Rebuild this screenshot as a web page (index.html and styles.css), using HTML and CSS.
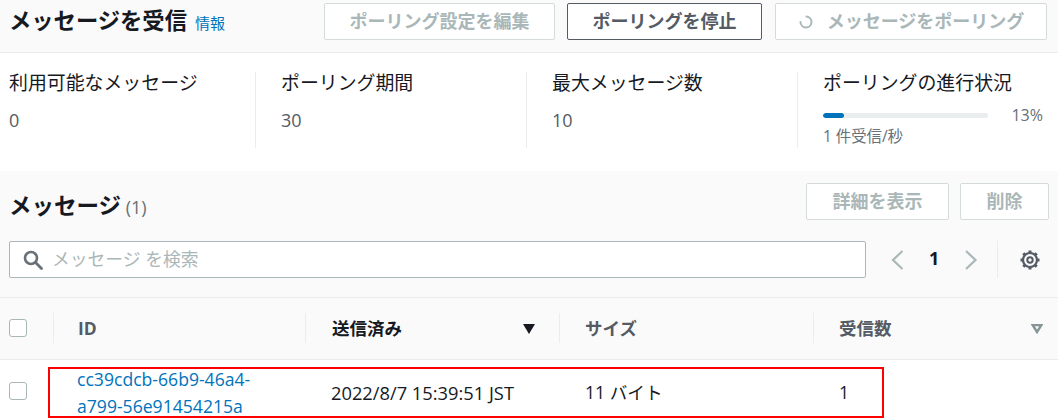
FILE: index.html
```html
<!DOCTYPE html>
<html lang="ja">
<head>
<meta charset="utf-8">
<title>メッセージを受信</title>
<link rel="stylesheet" href="styles.css">
</head>
<body>
<div class="page">
  <header class="topbar">
    <div class="title-wrap">
      <h1 class="h-title">メッセージを受信</h1>
      <a class="info" href="#">情報</a>
    </div>
    <div class="actions">
      <button class="btn btn-edit" disabled>ポーリング設定を編集</button>
      <button class="btn btn-stop">ポーリングを停止</button>
      <button class="btn btn-poll" disabled>
        <svg class="spinner" width="16" height="16" viewBox="0 0 16 16"><path d="M8.5 2.500A5.500 5.500 0 1 1 2.500 8" fill="none" stroke="#aab7b8" stroke-width="2" stroke-linecap="round"/></svg>
        <span>メッセージをポーリング</span>
      </button>
    </div>
  </header>

  <section class="stats">
    <div class="stat"><div class="stat-label">利用可能なメッセージ</div><div class="stat-value">0</div></div>
    <div class="stat"><div class="stat-label">ポーリング期間</div><div class="stat-value">30</div></div>
    <div class="stat"><div class="stat-label">最大メッセージ数</div><div class="stat-value">10</div></div>
    <div class="stat stat-last">
      <div class="stat-label">ポーリングの進行状況</div>
      <div class="progress-row">
        <div class="progress"><div class="progress-fill"></div></div>
        <span class="progress-pct">13%</span>
      </div>
      <div class="progress-note">1 件受信/秒</div>
    </div>
  </section>

  <section class="messages">
    <div class="m-head">
      <h2 class="m-title">メッセージ<span class="count"> (1)</span></h2>
      <div class="m-actions">
        <button class="btn btn-detail" disabled>詳細を表示</button>
        <button class="btn btn-del" disabled>削除</button>
      </div>
    </div>
    <div class="tools">
      <div class="search">
        <svg width="20" height="20" viewBox="0 0 20 20"><circle cx="8" cy="8" r="6" fill="none" stroke="#687078" stroke-width="2.600"/><path d="M12.800 12.800 18.500 18.500" stroke="#687078" stroke-width="2.800" stroke-linecap="round"/></svg>
        <span class="placeholder">メッセージ を検索</span>
      </div>
      <div class="pager">
        <svg width="14" height="20" viewBox="0 0 14 20"><path d="M12.500 1 3 10l9.500 9" fill="none" stroke="#aab7b8" stroke-width="2.200"/></svg>
        <span class="page-num">1</span>
        <svg width="14" height="20" viewBox="0 0 14 20"><path d="M2 1l9.500 9L2 19" fill="none" stroke="#aab7b8" stroke-width="2.200"/></svg>
      </div>
      <div class="gear-wrap">
        <svg width="20" height="20" viewBox="0 0 20 20"><circle cx="10" cy="10" r="2.700" fill="none" stroke="#545b64" stroke-width="2"/><circle cx="10" cy="10" r="7" fill="none" stroke="#545b64" stroke-width="2.200"/><path d="M10 .5v3M10 16.500v3M.5 10h3M16.500 10h3M3.300 3.300l2 2M14.700 14.700l2 2M3.300 16.700l2-2M14.700 5.300l2-2" stroke="#545b64" stroke-width="3"/></svg>
      </div>
    </div>
  </section>

  <div class="table">
    <div class="t-row t-header">
      <div class="cell cell-check"><span class="check"></span></div>
      <div class="cell th th-id"><span class="th-sep"></span><span class="th-text">ID</span></div>
      <div class="cell th th-sent"><span class="th-sep"></span><span class="th-text th-active">送信済み</span><svg class="sort" width="12" height="10" viewBox="0 0 12 10"><path d="M0 0h12L6 10z" fill="#16191f"/></svg></div>
      <div class="cell th"><span class="th-sep"></span><span class="th-text">サイズ</span></div>
      <div class="cell th th-last"><span class="th-sep"></span><span class="th-text">受信数</span><svg class="sort" width="12" height="10" viewBox="0 0 12 10"><path d="M1.600 1h8.800L6 8z" fill="none" stroke="#879596" stroke-width="2.400"/></svg></div>
    </div>
    <div class="t-row t-body">
      <div class="cell cell-check"><span class="check"></span></div>
      <div class="cell td td-id"><a href="#">cc39cdcb-66b9-46a4-a799-56e91454215a</a></div>
      <div class="cell td td-date">2022/8/7 15:39:51 JST</div>
      <div class="cell td">11 バイト</div>
      <div class="cell td">1</div>
    </div>
  </div>
  <div class="highlight"></div>
</div>
</body>
</html>
```
FILE: styles.css
```css
* { box-sizing: border-box; }
html, body { margin: 0; padding: 0; background: #fff; }
body { font-family: "Open Sans", "Noto Sans CJK JP", sans-serif; color: #16191f; font-size: 16px; }
.page { position: relative; width: 1058px; height: 418px; overflow: hidden; }

.topbar { height: 53px; background: #fafafa; border-bottom: 1px solid #eaeded; display: flex; justify-content: space-between; padding: 3px 11px 0 9px; }
.title-wrap { display: flex; align-items: baseline; gap: 8px; height: 37px; line-height: 36px; }
.h-title { margin: 0; font-size: 22.300px; font-weight: 700; color: #16191f; }
.info { font-size: 15px; font-weight: 400; color: #0073bb; text-decoration: none; }
.actions { display: flex; gap: 12px; }

.btn { font-family: inherit; font-size: 18px; font-weight: 700; height: 37px; background: #fff; border: 1px solid #d5dbdb; border-radius: 2px; color: #aab7b8; padding: 0 0 4px; display: flex; align-items: center; justify-content: center; }
.btn-edit { width: 231px; }
.btn-stop { width: 195px; border-color: #545b64; color: #545b64; }
.btn-poll { width: 272px; gap: 13px; margin-left: 1px; }
.spinner { margin-top: 4px; }
.btn-detail { width: 143px; }
.btn-del { width: 89px; }

.stats { height: 118px; display: grid; grid-template-columns: 271px 271px 271px 245px; padding-top: 19px; }
.stat { height: 76px; padding-left: 9px; border-right: 1px solid #eaeded; }
.stat + .stat { padding-left: 25px; }
.stat:nth-child(1) { width: 256px; }
.stat:nth-child(2) { margin-left: -15px; width: 271px; }
.stat:nth-child(3) { margin-left: -15px; width: 271px; }
.stat-last { border-right: 0; margin-left: -15px; padding-right: 15px; }
.stat-label { font-size: 18.900px; line-height: 22px; color: #16191f; }
.stat-value { font-size: 18px; line-height: 22px; color: #545b64; margin-top: 15px; }
.progress-row { display: flex; align-items: center; margin-top: 11px; height: 20px; }
.progress { width: 165px; height: 5px; border-radius: 3px; background: #eaeded; overflow: hidden; }
.progress-fill { width: 21px; height: 5px; background: #0073bb; border-radius: 3px; }
.progress-pct { font-size: 16px; color: #687078; margin-left: auto; }
.progress-note { font-size: 15.400px; line-height: 20px; color: #687078; margin-top: 2px; }

.messages { height: 127px; background: #fafafa; padding: 12px 9px 0; border-bottom: 1px solid #eaeded; }
.m-head { display: flex; justify-content: space-between; height: 37px; }
.m-title { margin: 0; font-size: 22.500px; font-weight: 700; line-height: 46px; }
.count { font-size: 18px; font-weight: 400; color: #687078; }
.m-actions { display: flex; gap: 11px; }
.tools { display: flex; align-items: center; margin-top: 21px; height: 37px; }
.search { width: 857px; height: 37px; background: #fff; border: 1px solid #aab7b8; border-radius: 2px; display: flex; align-items: center; gap: 9px; padding-left: 13px; }
.placeholder { font-size: 17.800px; color: #aab7b8; padding-bottom: 3px; }
.pager { display: flex; align-items: center; margin-left: 24px; gap: 25px; height: 37px; width: 108px; border-right: 1px solid #eaeded; }
.page-num { font-size: 18px; font-weight: 700; color: #16191f; padding-bottom: 3px; }
.gear-wrap { margin-left: 22px; height: 20px; }

.table { background: #fff; }
.t-row { display: grid; grid-template-columns: 53px 252px 254px 254px 245px; }
.t-header { height: 62px; background: #fafafa; border-bottom: 1px solid #eaeded; }
.t-body { height: 64px; }
.cell { display: flex; align-items: center; position: relative; }
.cell-check { padding-left: 9px; padding-bottom: 2px; }
.check { width: 18px; height: 18px; background: #fff; border: 1px solid #aab7b8; border-radius: 3px; }
.th { padding-left: 26px; padding-right: 23px; justify-content: space-between; font-size: 17.500px; font-weight: 700; color: #545b64; }
.th-id { padding-left: 25px; }
.th-sent { padding-left: 27px; padding-right: 24px; }
.th-last { padding-right: 15px; }
.th-sep { position: absolute; left: 0; top: 15px; height: 30px; width: 1px; background: #eaeded; }
.th-text { padding-bottom: 2px; }
.th-active { color: #16191f; }
.t-body .td { padding-left: 26px; font-size: 17.600px; color: #16191f; line-height: 27px; }
.t-body .td-date { font-size: 18.300px; }
.t-body .td-id { padding: 2px 30px 0 24px; }
.td-id a { color: #0073bb; text-decoration: none; }

.highlight { position: absolute; left: 48px; top: 367px; width: 836px; height: 51px; border: 2px solid #f00; }
```
